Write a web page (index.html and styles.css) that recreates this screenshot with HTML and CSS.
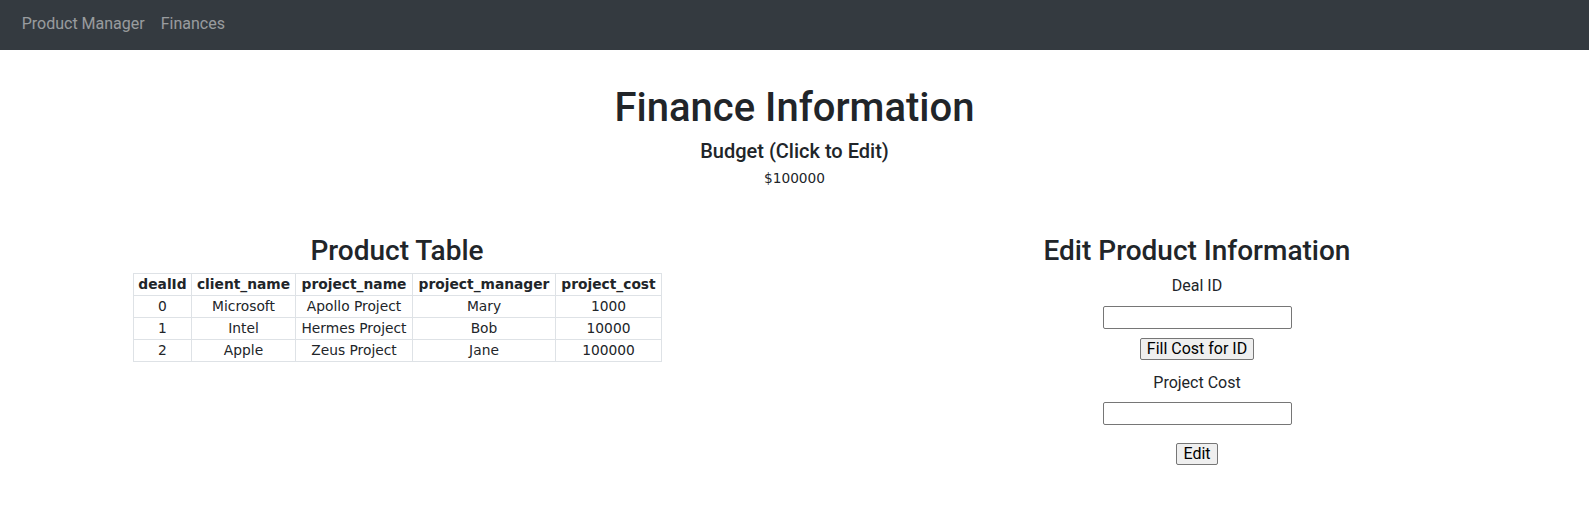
FILE: index.html
```html
<!DOCTYPE html>
<html lang="en">
<head>
<meta charset="utf-8">
<title>Finances</title>
<link rel="stylesheet" href="styles.css">
</head>
<body>
<nav class="navbar">
  <a class="nav-link" href="#">Product Manager</a>
  <a class="nav-link" href="#">Finances</a>
</nav>
<header class="summary">
  <h1 class="title">Finance Information</h1>
  <h5 class="budget-label">Budget (Click to Edit)</h5>
  <p class="budget-value">$100000</p>
</header>
<main class="panels">
  <section class="col-table">
    <h3 class="section-title">Product Table</h3>
    <table class="product-table">
      <thead>
        <tr><th>dealId</th><th>client_name</th><th>project_name</th><th>project_manager</th><th>project_cost</th></tr>
      </thead>
      <tbody>
        <tr><td>0</td><td>Microsoft</td><td>Apollo Project</td><td>Mary</td><td>1000</td></tr>
        <tr><td>1</td><td>Intel</td><td>Hermes Project</td><td>Bob</td><td>10000</td></tr>
        <tr><td>2</td><td>Apple</td><td>Zeus Project</td><td>Jane</td><td>100000</td></tr>
      </tbody>
    </table>
  </section>
  <section class="col-form">
    <h3 class="section-title">Edit Product Information</h3>
    <label class="field-label" for="deal">Deal ID</label>
    <input class="field-input input-deal" id="deal" type="text">
    <button class="btn btn-fill" type="button">Fill Cost for ID</button>
    <label class="field-label label-cost" for="cost">Project Cost</label>
    <input class="field-input input-cost" id="cost" type="text">
    <button class="btn btn-edit" type="button">Edit</button>
  </section>
</main>
</body>
</html>
```

FILE: styles.css
```css
* { box-sizing: border-box; }

body {
  margin: 0;
  font-family: Roboto, "Liberation Sans", sans-serif;
  font-size: 16px;
  line-height: 1.5;
  color: #212529;
  background: #fff;
}

.navbar {
  display: flex;
  align-items: flex-start;
  gap: 16px;
  height: 50px;
  padding: 12px 0 0 21.7px;
  background: #343a40;
}

.nav-link {
  color: rgba(255, 255, 255, 0.5);
  text-decoration: none;
  font-size: 16px;
  line-height: 24px;
}

.summary {
  text-align: center;
  padding-top: 34px;
}

.title {
  margin: 0 0 6.5px;
  font-size: 40px;
  font-weight: 500;
  line-height: 48px;
}

.budget-label {
  margin: 0 0 5.4px;
  font-size: 20px;
  font-weight: 500;
  line-height: 24px;
}

.budget-value {
  margin: 0;
  font-family: "DejaVu Sans", Verdana, sans-serif;
  font-size: 13.7px;
  line-height: 20px;
}

.panels {
  display: grid;
  grid-template-columns: 528px 500px;
  column-gap: 286px;
  padding-left: 133px;
  margin-top: 45.7px;
}

.section-title {
  margin: 0 0 6px;
  font-size: 28px;
  font-weight: 500;
  line-height: 33.6px;
  text-align: center;
}

.product-table {
  border-collapse: collapse;
  table-layout: fixed;
  width: 528px;
  font-family: "DejaVu Sans", Verdana, sans-serif;
  font-size: 13.8px;
  line-height: 21px;
  text-align: center;
  color: #212529;
}

.product-table th,
.product-table td {
  border: 1px solid #dee2e6;
  padding: 0;
  white-space: nowrap;
}

.product-table th { font-weight: 700; }
.product-table th:nth-child(1) { width: 58px; }
.product-table th:nth-child(2) { width: 104px; }
.product-table th:nth-child(3) { width: 117px; }
.product-table th:nth-child(4) { width: 143px; }
.product-table th:nth-child(5) { width: 106px; }

.col-form {
  display: flex;
  flex-direction: column;
  align-items: center;
}

.field-label {
  display: block;
  padding-top: 1px;
  line-height: 24px;
}

.field-input {
  width: 189px;
  height: 22.7px;
  border: 1px solid #767676;
  border-radius: 2px;
  background: #fff;
  padding: 1px 2px;
  font: inherit;
}

.input-deal { margin-top: 7.8px; }
.input-cost { margin-top: 7.5px; }

.btn {
  height: 22.5px;
  padding: 0 6px;
  border: 1px solid #767676;
  border-radius: 2px;
  background: #efefef;
  color: #000;
  font-family: inherit;
  font-size: 16px;
  line-height: 20px;
}

.btn-fill { margin-top: 9.3px; }
.label-cost { margin-top: 9.5px; }
.btn-edit { margin-top: 17.8px; }
```
